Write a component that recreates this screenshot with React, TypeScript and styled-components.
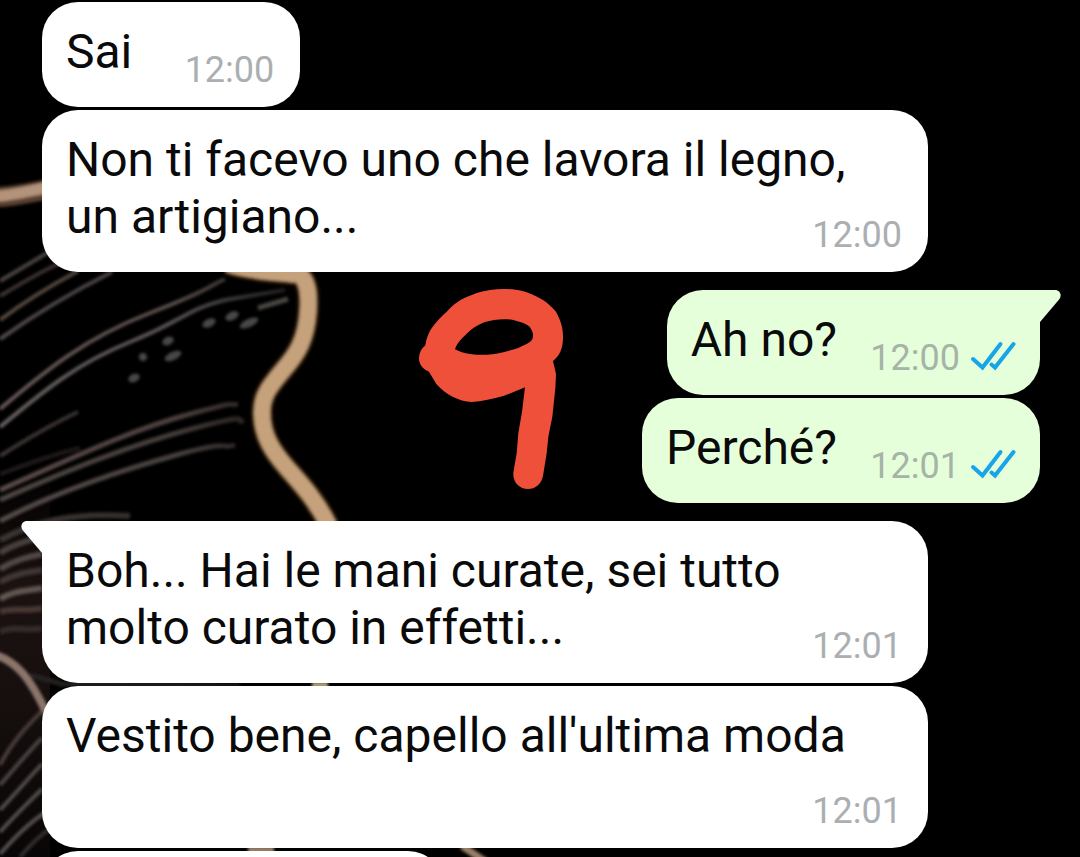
import React from "react";
import styled, { createGlobalStyle, css } from "styled-components";

const GlobalStyle = createGlobalStyle`
  * { box-sizing: border-box; }
  body {
    margin: 0;
    background: #000;
    font-family: Roboto, "Liberation Sans", sans-serif;
  }
`;

const Page = styled.main`
  position: relative;
  height: 100vh;
  overflow: hidden;
  background: #000;
`;

const Wallpaper = styled.svg`
  position: absolute;
  top: 0;
  left: 0;
`;

const Ink = styled.svg`
  position: absolute;
  top: 270px;
  left: 400px;
`;

const Thread = styled.ol`
  position: relative;
  display: flex;
  flex-direction: column;
  gap: 18px;
  margin: 0;
  padding: 2px 40px 0 42px;
  list-style: none;
`;

const Group = styled.li<{ $sent?: boolean }>`
  display: flex;
  flex-direction: column;
  align-items: ${(p) => (p.$sent ? "flex-end" : "flex-start")};
  gap: 3px;
`;

const Bubble = styled.article<{ $sent?: boolean; $tail?: boolean }>`
  position: relative;
  display: grid;
  max-width: min(886px, 100%);
  padding: 21px 24px 27px;
  border-radius: 36px;
  background: ${(p) => (p.$sent ? "#e5ffdb" : "#fff")};
  ${(p) =>
    p.$tail &&
    (p.$sent
      ? css`
          border-top-right-radius: 0;
        `
      : css`
          border-top-left-radius: 0;
        `)}
`;

/* The trailing inline block keeps the last line clear of the time stamp. */
const Text = styled.p<{ $sent?: boolean }>`
  grid-area: 1 / 1;
  margin: 0;
  padding-right: 4px;
  color: #0a0a0a;
  font-size: 48px;
  line-height: 57px;

  &::after {
    content: "";
    display: inline-block;
    width: ${(p) => (p.$sent ? "175px" : "140px")};
  }
`;

const Meta = styled.footer<{ $sent?: boolean }>`
  grid-area: 1 / 1;
  place-self: end;
  display: flex;
  align-items: center;
  gap: 10px;
  margin-bottom: -11px;
  padding-right: ${(p) => (p.$sent ? "0" : "2px")};
  color: ${(p) => (p.$sent ? "#a7b3a6" : "#abafb1")};
  font-size: 36px;
  line-height: 42px;
`;

const Tail = styled.svg<{ $sent?: boolean }>`
  position: absolute;
  top: 0;
  ${(p) => (p.$sent ? "right: -21px; transform: scaleX(-1);" : "left: -21px;")}
  fill: ${(p) => (p.$sent ? "#e5ffdb" : "#fff")};
`;

const NextBubble = styled(Bubble)`
  width: 402px;
  height: 105px;
`;

const Ticks = () => (
  <svg width="46" height="34" viewBox="0 0 46 34" role="img" aria-label="Letto">
    <g fill="none" stroke="#16a5e6" strokeWidth="4" strokeLinecap="round" strokeLinejoin="miter">
      <path d="M3 18L12.500 26.500L30.500 3" />
      <path d="M21.500 23.500L25 26.500L43.500 3" />
    </g>
  </svg>
);

type MessageProps = {
  text: string;
  time: string;
  sent?: boolean;
  tail?: boolean;
};

const Message = ({ text, time, sent, tail }: MessageProps) => (
  <Bubble $sent={sent} $tail={tail}>
    {tail && (
      <Tail $sent={sent} width="22" height="33" viewBox="0 0 22 33" aria-hidden="true">
        <path d="M22 0H6C1 0-1 5 1.500 9L21 32H22Z" />
      </Tail>
    )}
    <Text $sent={sent}>{text}</Text>
    <Meta $sent={sent}>
      <time>{time}</time>
      {sent && <Ticks />}
    </Meta>
  </Bubble>
);

const strands: [string, string, number][] = [
  ["M0 281C12 274 25 266 37 259L62 244", "#4b4441", 4],
  ["M0 296C20 284 40 272 62 262", "#3d3331", 4],
  ["M0 320C24 302 48 287 78 271", "#55483f", 4],
  ["M0 339C34 315 70 293 112 272", "#514a49", 4],
  ["M0 409C45 371 85 338 150 313S205 288 225 279", "#675a57", 4],
  ["M0 427C40 394 75 364 130 342S185 310 225 300L285 290", "#66605e", 4],
  ["M0 456C22 442 48 426 78 412", "#3d3635", 4],
  ["M0 474C25 465 50 455 80 448", "#231c1b", 4],
  ["M0 490C70 459 130 430 190 414S222 407 238 404", "#5a4c49", 5],
  ["M0 500C68 470 130 445 195 428S230 423 244 421", "#504643", 5],
  ["M0 521C60 490 125 469 180 454S220 450 235 445", "#554b48", 5],
  ["M0 540C35 522 70 512 130 516", "#3a3431", 6],
  ["M0 553C12 545 24 541 42 537", "#49413e", 6],
  ["M0 569C14 560 28 557 42 554", "#524a46", 6],
  ["M0 582C14 574 28 572 42 570", "#403835", 6],
  ["M0 599C14 590 28 591 42 588", "#625751", 6],
  ["M0 612C14 607 28 612 42 608", "#4a3933", 6],
  ["M0 632C14 625 28 632 42 628", "#35292a", 6],
  ["M30 675L62 684L240 685", "#282321", 5],
  ["M0 765C12 742 26 727 42 711", "#4a3c3a", 4],
  ["M0 785C14 769 28 752 42 738", "#4b4543", 4],
  ["M0 810C14 795 28 779 42 764", "#554e4b", 4],
  ["M0 832C14 816 28 803 42 789", "#55504e", 4],
  ["M0 854C14 838 28 823 46 812", "#59504f", 4],
  ["M20 857C30 845 40 835 50 829", "#342e2d", 4],
];

const specks: [number, number, number][] = [
  [134, 378, 6],
  [168, 341, 6],
  [173, 356, 9],
  [209, 323, 7],
  [232, 316, 7],
  [249, 323, 10],
  [143, 357, 4],
];

const Backdrop = () => (
  <Wallpaper width="520" height="857" viewBox="0 0 520 857" aria-hidden="true">
    <defs>
      <filter id="soft" filterUnits="userSpaceOnUse" x="-20" y="-20" width="560" height="897">
        <feGaussianBlur stdDeviation="1.600" />
      </filter>
      <linearGradient id="edge" gradientUnits="userSpaceOnUse" x1="0" y1="0" x2="290" y2="0">
        <stop offset="0" stopColor="#fff" />
        <stop offset="0.600" stopColor="#fff" stopOpacity="0.850" />
        <stop offset="1" stopColor="#fff" stopOpacity="0.300" />
      </linearGradient>
      <mask id="fade" maskUnits="userSpaceOnUse" x="0" y="0" width="520" height="857">
        <rect width="520" height="857" fill="url(#edge)" />
      </mask>
      <linearGradient id="glow" x1="0" y1="0" x2="0" y2="1">
        <stop offset="0" stopColor="#1b1211" stopOpacity="0" />
        <stop offset="0.300" stopColor="#1b1211" />
        <stop offset="0.600" stopColor="#160f0e" />
        <stop offset="1" stopColor="#080606" />
      </linearGradient>
    </defs>
    <rect y="470" width="50" height="387" fill="url(#glow)" />
    <g mask="url(#fade)">
      <g fill="none" filter="url(#soft)">
        {strands.map(([d, color, width]) => (
          <path key={d} d={d} stroke={color} strokeWidth={width} />
        ))}
      </g>
    </g>
    <g fill="none" filter="url(#soft)">
      {specks.map(([x, y, r]) => (
        <ellipse
          key={x}
          cx={x}
          cy={y}
          rx={r}
          ry="4"
          fill="#484645"
          transform={`rotate(-25 ${x} ${y})`}
        />
      ))}
      <path d="M258 308L288 299" stroke="#484541" strokeWidth="5" />
      <path d="M-4 197C12 197 28 193 60 187" stroke="#5a4030" strokeWidth="20" />
      <path d="M-4 196C12 196 28 191 60 185" stroke="#b3937a" strokeWidth="11" />
      <path
        d="M228 264C250 272 280 272 300 275C309 282 309 298 308 312C306 340 297 354 284 369C268 388 262 396 262 413C262 436 273 452 287 468C302 485 316 500 329 526"
        stroke="#3a2411"
        strokeWidth="22"
      />
      <path
        d="M228 264C250 272 280 272 300 275C309 282 309 298 308 312C306 340 297 354 284 369C268 388 262 396 262 413C262 436 273 452 287 468C302 485 316 500 329 526"
        stroke="#c5a27b"
        strokeWidth="16"
      />
      <path d="M-4 655C17 662 30 678 46 712" stroke="#8b756b" strokeWidth="8" />
      <path d="M312 685H328" stroke="#b29a73" strokeWidth="6" />
      <path d="M248 850H274M462 846L486 862" stroke="#9a7e68" strokeWidth="7" />
    </g>
  </Wallpaper>
);

export default function App() {
  return (
    <>
      <GlobalStyle />
      <Page>
        <Backdrop />
        <Thread>
          <Group>
            <Message text="Sai" time="12:00" />
            <Message text="Non ti facevo uno che lavora il legno, un artigiano..." time="12:00" />
          </Group>
          <Group $sent>
            <Message text="Ah no?" time="12:00" sent tail />
            <Message text="Perché?" time="12:01" sent />
          </Group>
          <Group>
            <Message
              text="Boh... Hai le mani curate, sei tutto molto curato in effetti..."
              time="12:01"
              tail
            />
            <Message text="Vestito bene, capello all'ultima moda" time="12:01" />
            <NextBubble />
          </Group>
        </Thread>
        <Ink width="200" height="240" viewBox="0 0 600 720" role="img" aria-label="9">
          <path
            fill="#ee503a"
            fillRule="evenodd"
            d="M76 226C82 178 112 152 140 125C174 89 194 83 230 69C280 54 332 53 378 66C422 83 440 93 468 125C482 151 490 174 489 205C488 237 480 256 459 273L468 312L466 355L457 440L445 500L440 550L429 618C424 643 406 657 384 657C358 657 338 637 340 608L350 550L355 490L366 425L375 352C349 364 330 370 310 378C280 387 245 394 215 396C176 394 137 374 109 342L87 305C67 297 57 282 57 264C58 247 65 235 76 226ZM165 238C169 222 184 206 200 191C216 175 232 165 253 157C282 148 312 145 340 150C361 156 377 160 389 170C397 182 400 190 399 201C397 217 378 222 355 234L310 247C275 255 245 256 215 253C195 250 180 246 165 238Z"
          />
        </Ink>
      </Page>
    </>
  );
}
